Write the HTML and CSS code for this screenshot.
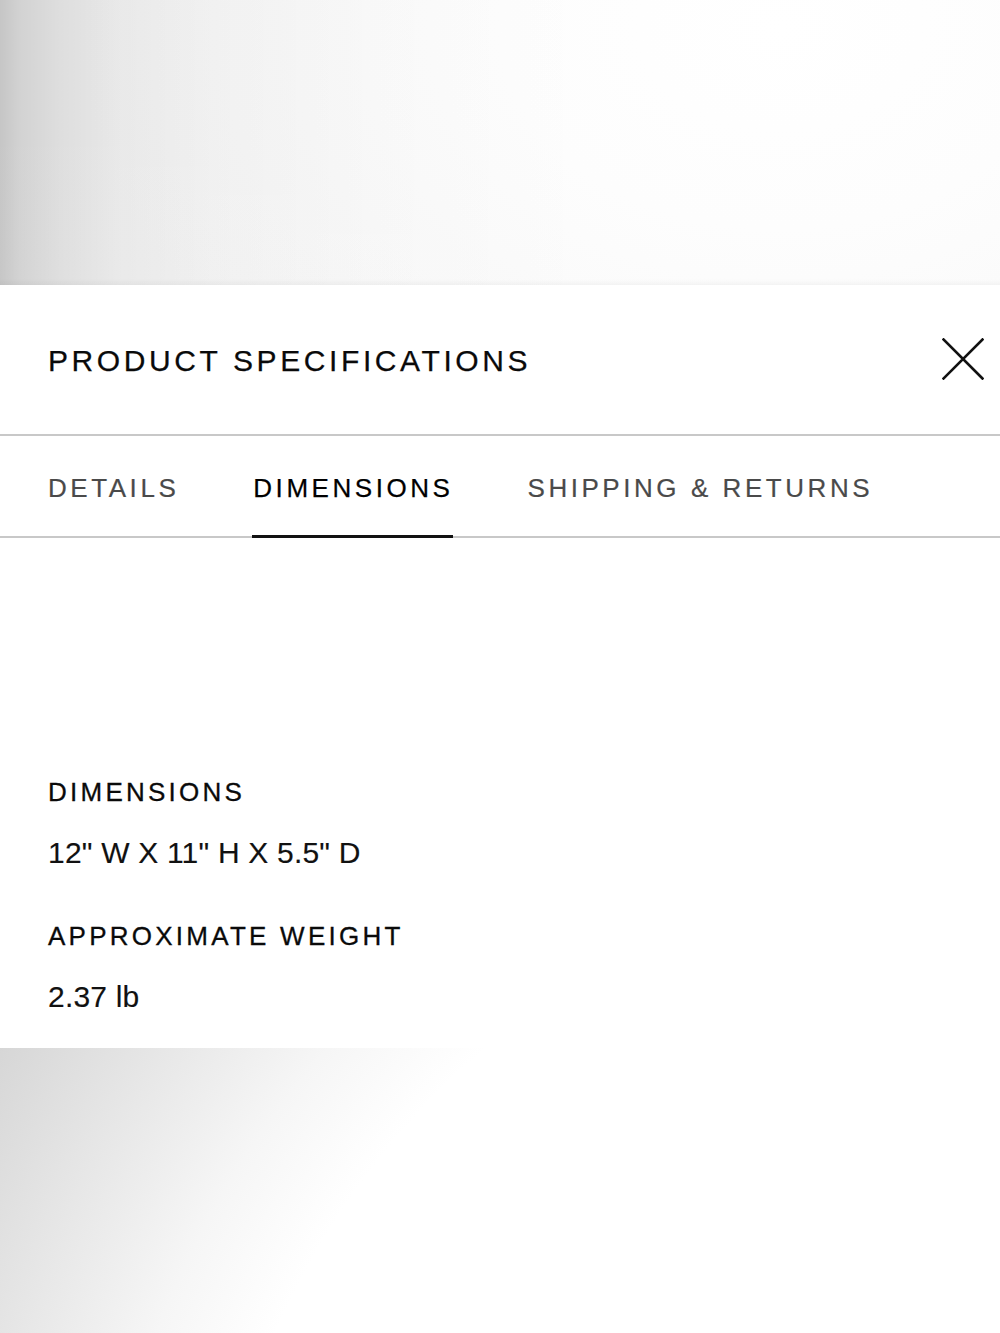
FILE: index.html
```html
<!DOCTYPE html>
<html lang="en">
<head>
<meta charset="utf-8">
<title>Product Specifications</title>
<link rel="stylesheet" href="styles.css">
</head>
<body>
<div class="backdrop backdrop-top"></div>
<section class="panel">
  <header class="panel-head">
    <h2 class="panel-title">PRODUCT SPECIFICATIONS</h2>
    <button class="close" aria-label="Close">
      <svg width="42" height="42" viewBox="0 0 42 42" fill="none" stroke="#111" stroke-width="2.6" stroke-linecap="square">
        <path d="M1.5 1.5 L40.5 40.5 M40.5 1.5 L1.5 40.5"/>
      </svg>
    </button>
  </header>
  <nav class="tabs">
    <a class="tab">DETAILS</a>
    <a class="tab active">DIMENSIONS</a>
    <a class="tab">SHIPPING &amp; RETURNS</a>
  </nav>
  <dl class="specs">
    <dt class="spec-label">DIMENSIONS</dt>
    <dd class="spec-value">12" W X 11" H X 5.5" D</dd>
    <dt class="spec-label spec-label-next">APPROXIMATE WEIGHT</dt>
    <dd class="spec-value">2.37 lb</dd>
  </dl>
</section>
<div class="backdrop backdrop-bottom"></div>
</body>
</html>
```
FILE: styles.css
```css
html, body {
  margin: 0;
  padding: 0;
  background: #fff;
}
body {
  width: 1000px;
  font-family: "Liberation Sans", Arial, Helvetica, sans-serif;
  color: #111;
}
.backdrop {
  height: 285px;
}
.backdrop-top {
  background:
    linear-gradient(to right, rgba(0,0,0,0.20) 0px, rgba(0,0,0,0.15) 20px, rgba(0,0,0,0.10) 60px, rgba(0,0,0,0.06) 120px, rgba(0,0,0,0.03) 220px, rgba(0,0,0,0.012) 380px, rgba(0,0,0,0) 600px),
    linear-gradient(to bottom, rgba(255,255,255,0) 0px, rgba(255,255,255,0.12) 285px),
    linear-gradient(to bottom, rgba(0,0,0,0) 0px, rgba(0,0,0,0) 279px, rgba(0,0,0,0.04) 285px),
    radial-gradient(ellipse 700px 500px at 78% 10%, #ffffff 0%, #fdfdfd 40%, #f7f7f7 100%);
  background-color: #f7f7f7;
}
.backdrop-bottom {
  background:
    radial-gradient(circle at 1000px 600px, #ffffff 0px, #ffffff 790px, #f6f6f6 900px, #e8e8e8 1020px, #d6d6d6 1170px);
}
.panel {
  height: 763px;
  background: #fff;
  display: flex;
  flex-direction: column;
}
.panel-head {
  border-bottom: 2px solid #c8c8c8;
  display: flex;
  align-items: center;
  justify-content: space-between;
  padding: 2px 16px 0 48px;
  box-sizing: border-box;
  height: 151px;
}
.panel-title {
  margin: 0;
  font-size: 30px;
  font-weight: 400;
  letter-spacing: 3.6px;
  color: #0a0a0a;
  line-height: 36px;
  -webkit-text-stroke: 0.25px #0a0a0a;
}
.close {
  border: 0;
  background: none;
  padding: 0;
  width: 42px;
  height: 42px;
  display: flex;
  margin-top: -4px;
}
.tabs {
  display: flex;
  gap: 74px;
  padding: 0 0 0 48px;
  height: 100px;
  border-bottom: 2px solid #c8c8c8;
  align-items: center;
}
.tab {
  position: relative;
  font-size: 26px;
  letter-spacing: 3.55px;
  line-height: 32px;
  color: #4a4a4a;
  margin-top: 4px;
  -webkit-text-stroke: 0.2px #4a4a4a;
}
.tab.active {
  color: #000;
  -webkit-text-stroke: 0.25px #000;
}
.tab.active::after {
  content: "";
  position: absolute;
  left: -1px;
  right: 0;
  top: 63px;
  height: 3px;
  background: #111;
}
.specs {
  margin: 0;
  padding: 238px 48px 0;
}
.spec-label {
  font-size: 26px;
  line-height: 32px;
  letter-spacing: 3.25px;
  color: #0a0a0a;
  -webkit-text-stroke: 0.3px #0a0a0a;
}
.spec-label-next {
  margin-top: 49px;
}
.spec-value {
  margin: 27px 0 0;
  font-size: 30px;
  line-height: 36px;
  letter-spacing: 0.2px;
  color: #111;
  -webkit-text-stroke: 0.15px #111;
}
.spec-label + .spec-value {
  margin-top: 27px;
}
```
